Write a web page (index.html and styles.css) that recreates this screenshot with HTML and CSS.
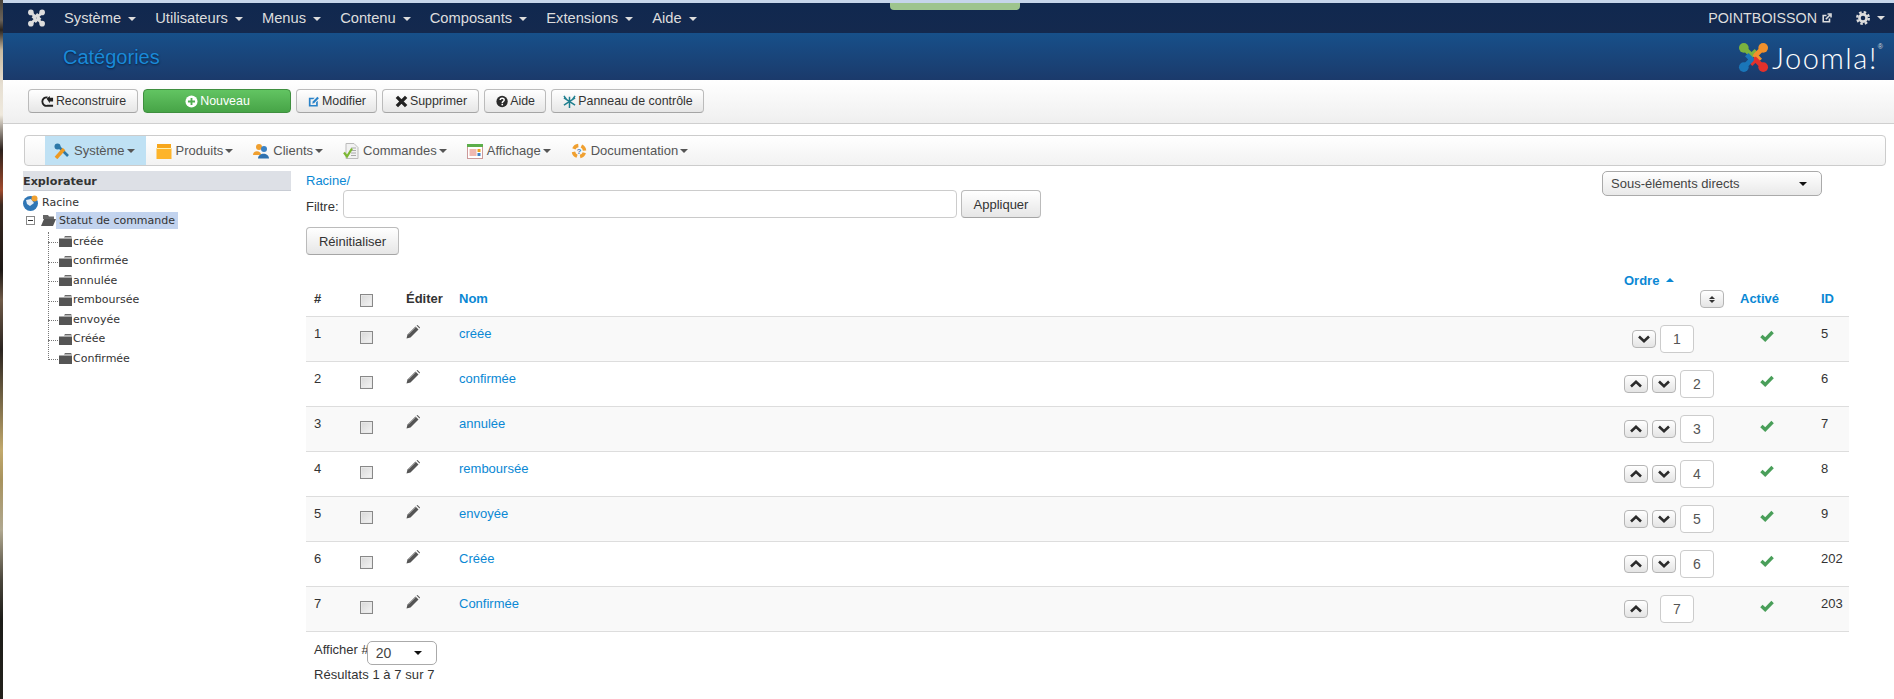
FILE: index.html
```html
<!DOCTYPE html>
<html lang="fr">
<head>
	<meta charset="UTF-8">
	<title>Catégories</title>
	<link rel="stylesheet" href="styles.css">
</head>
<body>
	<svg class="defs" width="0" height="0">
		<defs>
			<symbol id="i-piece" viewBox="0 0 32 32">
				<path d="M6 6 L14 14 L19 9" fill="none" stroke-width="5" stroke="currentColor" stroke-linejoin="round"/>
				<circle cx="6" cy="6" r="5" fill="currentColor"/>
			</symbol>
			<symbol id="i-up" viewBox="0 0 12 8">
				<path d="M1 6.5 L6 1.8 L11 6.5" fill="none" stroke="#2b2b2b" stroke-width="2.6"/>
			</symbol>
			<symbol id="i-down" viewBox="0 0 12 8">
				<path d="M1 1.5 L6 6.2 L11 1.5" fill="none" stroke="#2b2b2b" stroke-width="2.6"/>
			</symbol>
			<symbol id="i-pencil" viewBox="0 0 14 14">
				<path d="M0.5 13.5 L1.5 9.5 L9.5 1.5 L12.5 4.5 L4.5 12.5 Z" fill="#555"/>
				<path d="M10.5 0.5 L11.5 0 L14 2.5 L13.5 3.5 Z" fill="#555"/>
				<path d="M2.5 9.5 L9.8 2.2" stroke="#aaa" stroke-width="0.7"/>
			</symbol>
			<symbol id="i-check" viewBox="0 0 14 12">
				<path d="M1.4 6 L5.2 9.6 L12.6 2" fill="none" stroke="#4a9f5a" stroke-width="3.4"/>
			</symbol>
			<symbol id="i-folder" viewBox="0 0 13 11">
				<path d="M0 1.5 H5 L6 0 H12 L13 1.5 Z" fill="#6b6b6b"/>
				<path d="M0 2.5 H13 V11 H0 Z" fill="#555"/>
			</symbol>
		</defs>
	</svg>

	<div class="strip"></div>

	<div class="page">
		<div class="navbar">
			<div class="tab"></div>
			<svg class="nav-logo" viewBox="0 0 32 32">
				<use href="#i-piece"/>
				<use href="#i-piece" transform="rotate(90 16 16)"/>
				<use href="#i-piece" transform="rotate(180 16 16)"/>
				<use href="#i-piece" transform="rotate(270 16 16)"/>
			</svg>
			<ul class="nav-menu">
				<li>Système <b class="caret"></b></li>
				<li>Utilisateurs <b class="caret"></b></li>
				<li>Menus <b class="caret"></b></li>
				<li>Contenu <b class="caret"></b></li>
				<li>Composants <b class="caret"></b></li>
				<li>Extensions <b class="caret"></b></li>
				<li>Aide <b class="caret"></b></li>
			</ul>
			<div class="nav-right">
				<span class="site-name">POINTBOISSON</span>
				<svg class="ext-icon" viewBox="0 0 10 10">
					<path d="M7.5 5.5 V8.8 H1.2 V2.5 H4.5" fill="none" stroke="#ddd" stroke-width="1.6"/>
					<path d="M3.8 6.2 L8 2 M5.5 1 H9 V4.5" fill="none" stroke="#ddd" stroke-width="1.6"/>
				</svg>
				<svg class="gear-icon" viewBox="0 0 14 14">
					<circle cx="7" cy="7" r="3.6" fill="none" stroke="#ddd" stroke-width="2.6"/>
					<circle cx="7" cy="7" r="5.8" fill="none" stroke="#ddd" stroke-width="2.4" stroke-dasharray="2.5 2.05"/>
				</svg>
				<b class="caret"></b>
			</div>
		</div>

		<div class="title-bar">
			<h1>Catégories</h1>
			<div class="joomla">
				<svg class="joomla-mark" viewBox="0 0 32 32">
					<use href="#i-piece" class="c-green"/>
					<use href="#i-piece" class="c-orange" transform="rotate(90 16 16)"/>
					<use href="#i-piece" class="c-red" transform="rotate(180 16 16)"/>
					<use href="#i-piece" class="c-blue" transform="rotate(270 16 16)"/>
				</svg>
				<span class="joomla-text">Joomla!</span><span class="joomla-reg">®</span>
			</div>
		</div>

		<div class="toolbar">
			<button class="btn w-rebuild">
				<svg class="ico" viewBox="0 0 14 14">
					<path d="M7 2.6 A4.6 4.6 0 1 0 7 11.6 H13" fill="none" stroke="#222" stroke-width="2"/>
					<path d="M6 4 L9.5 1 V3 H13 V7 H9.5 V9 Z" fill="#222"/>
				</svg>
				Reconstruire
			</button>
			<button class="btn btn-new">
				<svg class="ico" viewBox="0 0 14 14">
					<circle cx="7" cy="7" r="6.5" fill="#fff"/>
					<path d="M7 3.2 V10.8 M3.2 7 H10.8" stroke="#50ad50" stroke-width="2"/>
				</svg>
				Nouveau
			</button>
			<button class="btn w-edit">
				<svg class="ico" viewBox="0 0 14 14">
					<path d="M1 2.5 H8 L6 4.5 H3 V11 H9.5 V8 L11.5 6 V13 H1 Z" fill="#2a83c9"/>
					<path d="M5 9.5 L5.6 7 L11 1.5 L12.8 3.3 L7.4 8.8 Z" fill="#2a83c9"/>
				</svg>
				Modifier
			</button>
			<button class="btn w-delete">
				<svg class="ico" viewBox="0 0 14 14">
					<path d="M2 2 L12 12 M12 2 L2 12" stroke="#222" stroke-width="3.6"/>
				</svg>
				Supprimer
			</button>
			<button class="btn w-help">
				<svg class="ico" viewBox="0 0 14 14">
					<circle cx="7" cy="7" r="6.5" fill="#2a2a2a"/>
					<path d="M4.8 5.4 C4.8 2.6 9.4 2.6 9.4 5.3 C9.4 7 7.2 6.9 7.2 8.6" fill="none" stroke="#fff" stroke-width="1.7"/>
					<rect x="6.3" y="9.6" width="1.8" height="1.8" fill="#fff"/>
				</svg>
				Aide
			</button>
			<button class="btn w-panel">
				<svg class="ico" viewBox="0 0 14 14">
					<path d="M7 2 V14 M1 3 L13 11 M13 3 L1 11 M1 1 L4 5 M13 1 L10 5" stroke="#1f7f8f" stroke-width="1.6" fill="none"/>
				</svg>
				Panneau de contrôle
			</button>
		</div>

		<div class="subnav">
			<div class="sub-item active">
				<svg class="sub-ico" viewBox="0 0 16 16">
					<path d="M3 2 L14 13" stroke="#2d78a8" stroke-width="2.6"/>
					<circle cx="3.5" cy="3.5" r="3" fill="#2d78a8"/>
					<path d="M2 15 L10 6" stroke="#ee9a22" stroke-width="3.6"/>
				</svg>
				Système <b class="caret-sm"></b>
			</div>
			<div class="sub-item">
				<svg class="sub-ico" viewBox="0 0 16 16">
					<rect x="1" y="1" width="14" height="4" fill="#f7a61b"/>
					<rect x="0.5" y="5" width="15" height="11" fill="#fdb42a"/>
					<rect x="0.5" y="5" width="15" height="1" fill="#fff0b0"/>
				</svg>
				Produits <b class="caret-sm"></b>
			</div>
			<div class="sub-item">
				<svg class="sub-ico" viewBox="0 0 16 16">
					<circle cx="6" cy="4" r="3" fill="#f0a030"/>
					<path d="M0 12 C0 7 8 7 8 12 Z" fill="#f0a030"/>
					<circle cx="11" cy="6" r="3" fill="#3b82c4"/>
					<path d="M5 15.5 C5 9 16 9 16 15.5 Z" fill="#2f72b0"/>
				</svg>
				Clients <b class="caret-sm"></b>
			</div>
			<div class="sub-item">
				<svg class="sub-ico" viewBox="0 0 16 16">
					<path d="M3 0.5 H11 L15 4.5 V15.5 H3 Z" fill="#f2f2f2" stroke="#bbb"/>
					<path d="M8 5 H13 M8 7.5 H13 M8 10 H13 M8 12.5 H13" stroke="#aaa"/>
					<path d="M1 9.5 L4 13.5 L9 5.5" fill="none" stroke="#7cb733" stroke-width="2.2"/>
				</svg>
				Commandes <b class="caret-sm"></b>
			</div>
			<div class="sub-item">
				<svg class="sub-ico" viewBox="0 0 16 16">
					<rect x="0.5" y="1.5" width="15" height="14" fill="#fff" stroke="#c99"/>
					<rect x="0" y="1" width="16" height="3" fill="#5cae4a"/>
					<rect x="2.5" y="6" width="7" height="7" fill="#f0b8b0"/>
					<rect x="10.5" y="6" width="3" height="3" fill="#e9a020"/>
					<rect x="10.5" y="10" width="3" height="3" fill="#3f7fc4"/>
				</svg>
				Affichage <b class="caret-sm"></b>
			</div>
			<div class="sub-item">
				<svg class="sub-ico" viewBox="0 0 16 16">
					<circle cx="8" cy="8" r="5.6" fill="none" stroke="#f0a030" stroke-width="3.4" stroke-dasharray="5.6 3.2" stroke-dashoffset="7"/>
					<text x="8" y="11" class="help-mark">?</text>
				</svg>
				Documentation <b class="caret-sm"></b>
			</div>
		</div>

		<div class="content">
			<div class="sidebar">
				<div class="side-title">Explorateur</div>
				<div class="tree">
					<div class="tree-root">
						<svg class="globe" viewBox="0 0 16 16">
							<circle cx="7.5" cy="8.5" r="7.5" fill="#2f76b5"/>
							<path d="M3 5 L8 4 L11 8 L7 11 L4 9 Z" fill="#e6eef6"/>
							<circle cx="11.5" cy="3.5" r="3" fill="#f0a030"/>
						</svg>
						Racine
					</div>
					<div class="tree-open">
						<span class="minus"></span>
						<svg class="folder-open" viewBox="0 0 15 11">
							<path d="M2 0 H7 L8 1.5 H13 V4 H2 Z" fill="#666"/>
							<path d="M3 4 H15 L12 11 H0 Z" fill="#555"/>
						</svg>
						<span class="selected">Statut de commande</span>
					</div>
					<ul class="tree-list">
						<li><svg class="folder"><use href="#i-folder"/></svg>créée</li>
						<li><svg class="folder"><use href="#i-folder"/></svg>confirmée</li>
						<li><svg class="folder"><use href="#i-folder"/></svg>annulée</li>
						<li><svg class="folder"><use href="#i-folder"/></svg>remboursée</li>
						<li><svg class="folder"><use href="#i-folder"/></svg>envoyée</li>
						<li><svg class="folder"><use href="#i-folder"/></svg>Créée</li>
						<li><svg class="folder"><use href="#i-folder"/></svg>Confirmée</li>
					</ul>
				</div>
			</div>

			<div class="main">
				<div class="filter-head">
					<div>
						<a class="link crumb">Racine/</a>
						<div class="filter-row">
							<label>Filtre:</label>
							<input type="text" class="filter-input">
							<button class="btn btn-plain">Appliquer</button>
						</div>
						<button class="btn btn-plain btn-reset">Réinitialiser</button>
					</div>
					<div class="drop drop-wide">Sous-éléments directs <b class="caret-dark"></b></div>
				</div>

				<table class="list">
					<colgroup>
						<col class="c1"><col class="c2"><col class="c3"><col class="c4"><col class="c5"><col class="c6"><col class="c7">
					</colgroup>
					<thead>
						<tr>
							<th>#</th>
							<th><input type="checkbox"></th>
							<th>Éditer</th>
							<th><a class="link">Nom</a></th>
							<th>
								<a class="link">Ordre</a><b class="caret-up"></b>
								<div class="sort-line"><button class="ord-btn"><span class="updown"></span></button></div>
							</th>
							<th><a class="link">Activé</a></th>
							<th><a class="link">ID</a></th>
						</tr>
					</thead>
					<tbody>
						<tr>
							<td>1</td>
							<td><input type="checkbox"></td>
							<td><svg class="pencil"><use href="#i-pencil"/></svg></td>
							<td><a class="link">créée</a></td>
							<td><div class="order"><span class="gap"></span><button class="ord-btn"><svg class="chev"><use href="#i-down"/></svg></button><input class="ord-input" value="1"></div></td>
							<td><svg class="check"><use href="#i-check"/></svg></td>
							<td>5</td>
						</tr>
						<tr>
							<td>2</td>
							<td><input type="checkbox"></td>
							<td><svg class="pencil"><use href="#i-pencil"/></svg></td>
							<td><a class="link">confirmée</a></td>
							<td><div class="order"><button class="ord-btn"><svg class="chev"><use href="#i-up"/></svg></button><button class="ord-btn"><svg class="chev"><use href="#i-down"/></svg></button><input class="ord-input" value="2"></div></td>
							<td><svg class="check"><use href="#i-check"/></svg></td>
							<td>6</td>
						</tr>
						<tr>
							<td>3</td>
							<td><input type="checkbox"></td>
							<td><svg class="pencil"><use href="#i-pencil"/></svg></td>
							<td><a class="link">annulée</a></td>
							<td><div class="order"><button class="ord-btn"><svg class="chev"><use href="#i-up"/></svg></button><button class="ord-btn"><svg class="chev"><use href="#i-down"/></svg></button><input class="ord-input" value="3"></div></td>
							<td><svg class="check"><use href="#i-check"/></svg></td>
							<td>7</td>
						</tr>
						<tr>
							<td>4</td>
							<td><input type="checkbox"></td>
							<td><svg class="pencil"><use href="#i-pencil"/></svg></td>
							<td><a class="link">remboursée</a></td>
							<td><div class="order"><button class="ord-btn"><svg class="chev"><use href="#i-up"/></svg></button><button class="ord-btn"><svg class="chev"><use href="#i-down"/></svg></button><input class="ord-input" value="4"></div></td>
							<td><svg class="check"><use href="#i-check"/></svg></td>
							<td>8</td>
						</tr>
						<tr>
							<td>5</td>
							<td><input type="checkbox"></td>
							<td><svg class="pencil"><use href="#i-pencil"/></svg></td>
							<td><a class="link">envoyée</a></td>
							<td><div class="order"><button class="ord-btn"><svg class="chev"><use href="#i-up"/></svg></button><button class="ord-btn"><svg class="chev"><use href="#i-down"/></svg></button><input class="ord-input" value="5"></div></td>
							<td><svg class="check"><use href="#i-check"/></svg></td>
							<td>9</td>
						</tr>
						<tr>
							<td>6</td>
							<td><input type="checkbox"></td>
							<td><svg class="pencil"><use href="#i-pencil"/></svg></td>
							<td><a class="link">Créée</a></td>
							<td><div class="order"><button class="ord-btn"><svg class="chev"><use href="#i-up"/></svg></button><button class="ord-btn"><svg class="chev"><use href="#i-down"/></svg></button><input class="ord-input" value="6"></div></td>
							<td><svg class="check"><use href="#i-check"/></svg></td>
							<td>202</td>
						</tr>
						<tr>
							<td>7</td>
							<td><input type="checkbox"></td>
							<td><svg class="pencil"><use href="#i-pencil"/></svg></td>
							<td><a class="link">Confirmée</a></td>
							<td><div class="order"><button class="ord-btn"><svg class="chev"><use href="#i-up"/></svg></button><span class="gap"></span><input class="ord-input" value="7"></div></td>
							<td><svg class="check"><use href="#i-check"/></svg></td>
							<td>203</td>
						</tr>
					</tbody>
				</table>

				<div class="pager">
					<div class="pager-row">Afficher #<div class="drop drop-small">20 <b class="caret-dark"></b></div></div>
					<div class="pager-count">Résultats 1 à 7 sur 7</div>
				</div>
			</div>
		</div>
	</div>
</body>
</html>
```

FILE: styles.css
```css
*{margin: 0;padding: 0;box-sizing: border-box;}
html,body{height: 100%;overflow: hidden;}
body{
	display: flex;
	background: #fff;
	color: #333;
	font-family: "Liberation Sans", Arial, sans-serif;
	font-size: 13px;
	line-height: 18px;
}
.defs{position: absolute;}
ul{list-style: none;}

/* bout de photo derriere la page */
.strip{
	width: 3px;
	flex: none;
	background: linear-gradient(to bottom, #4a443c 0, #6a635a 20px, #2a2420 30px, #c7b9a0 50px, #e6dfd2 85px, #efe9dd 115px, #2b211c 150px, #a04a2c 190px, #3a2a22 205px, #1c1714 270px, #6e5a48 300px, #2a2420 350px, #c2a96c 450px, #a8935e 480px, #b0a890 530px, #4a463c 580px, #1c1c18 620px, #23211c 699px);
}
.page{flex: 1;min-width: 0;}

/* barre du haut */
.navbar{
	position: relative;
	display: flex;
	align-items: center;
	height: 33px;
	border-top: 3px solid #c5d5ea;
	background: linear-gradient(to bottom, #10284f, #14294e);
	color: #ddd;
	font-size: 14.7px;
}
.tab{
	position: absolute;
	top: 0;
	left: 887px;
	width: 130px;
	height: 7px;
	background: #9dc48d;
	border-radius: 0 0 4px 4px;
}
.nav-logo{
	width: 19px;
	height: 18px;
	margin-left: 24px;
	color: #ddd;
}
.nav-menu{
	display: flex;
	gap: 19px;
	margin-left: 18px;
}
.nav-menu li{white-space: nowrap;}
.caret{
	display: inline-block;
	width: 0;
	height: 0;
	margin-left: 3px;
	vertical-align: middle;
	border-top: 4px solid #ddd;
	border-left: 4px solid transparent;
	border-right: 4px solid transparent;
}
.nav-right{
	display: flex;
	align-items: center;
	margin-left: auto;
	margin-right: 9px;
	font-size: 14.3px;
}
.ext-icon{width: 10px;height: 10px;margin-left: 5px;}
.gear-icon{width: 14px;height: 14px;margin-left: 24px;}
.nav-right .caret{margin-left: 7px;}

.title-bar{
	display: flex;
	justify-content: space-between;
	align-items: center;
	height: 47px;
	padding-left: 60px;
	background: linear-gradient(to bottom, #17508a, #1b3a6b);
}
.title-bar h1{
	font-size: 20px;
	font-weight: normal;
	color: #1a8ad8;
	text-shadow: 0 1px 2px #0a2140;
}
.joomla{
	display: flex;
	align-items: center;
	margin-right: 11px;
	margin-top: 2px;
}
.joomla-mark{width: 31px;height: 31px;}
.c-green{color: #7ab23e;}
.c-orange{color: #f0902c;}
.c-red{color: #e2312c;}
.c-blue{color: #1a76b9;}
.joomla-text{
	margin-left: 3px;
	font-family: Lato, sans-serif;
	font-weight: 300;
	font-size: 29px;
	letter-spacing: 1.55px;
	line-height: 31px;
	color: #fff;
}
.joomla-reg{
	align-self: flex-start;
	font-size: 7px;
	line-height: 10px;
	color: #ddd;
}

/* boutons */
.toolbar{
	display: flex;
	gap: 5px;
	height: 44px;
	padding: 9px 0 0 25px;
	background: linear-gradient(to bottom, #fff, #efefef);
	border-bottom: 1px solid #cfcfcf;
}
.btn{
	display: flex;
	align-items: center;
	justify-content: center;
	height: 24px;
	padding: 0 10px 0 11px;
	border: 1px solid #bbb;
	border-bottom-color: #a5a5a5;
	border-radius: 4px;
	background: linear-gradient(to bottom, #fff, #e6e6e6);
	color: #333;
	font: 12.4px "Liberation Sans", Arial, sans-serif;
	white-space: nowrap;
}
.ico{width: 13px;height: 13px;margin-right: 2px;}
.btn-new{
	width: 148px;
	background: linear-gradient(to bottom, #62c462, #47a447);
	border-color: #3f8f3f;
	color: #fff;
}
.w-rebuild{width: 110px;}
.w-edit{width: 81px;}
.w-delete{width: 97px;}
.w-help{width: 62px;}
.w-panel{width: 153px;}
.btn-plain{height: 28px;padding: 0 12px;font-size: 13px;}
.btn-reset{width: 93px;margin-top: 9px;}

/* menu secondaire */
.subnav{
	display: flex;
	height: 31px;
	margin: 11px 8px 0 21px;
	padding-left: 20px;
	border: 1px solid #ccc;
	border-radius: 4px;
	background: linear-gradient(to bottom, #fff, #f2f2f2);
	color: #555;
	font-size: 13px;
}
.sub-item{
	display: flex;
	align-items: center;
	padding: 0 10px;
	white-space: nowrap;
}
.sub-item.active{background: #bfe1f4;padding: 0 11px 0 9px;}
.sub-ico{width: 16px;height: 16px;margin-right: 4px;}
.help-mark{
	font-size: 8px;
	font-weight: bold;
	text-anchor: middle;
	fill: #3f7fc4;
}
.caret-sm{
	width: 0;
	height: 0;
	margin-left: 2px;
	border-top: 4px solid #555;
	border-left: 4px solid transparent;
	border-right: 4px solid transparent;
}

.content{
	display: flex;
	padding: 5px 0 0 20px;
}

/* explorateur */
.sidebar{
	width: 268px;
	flex: none;
	font-family: "DejaVu Sans", Verdana, sans-serif;
	font-size: 11px;
	color: #333;
}
.side-title{
	height: 20px;
	background: #dde0e6;
	border-bottom: 1px solid #c8ccd4;
	font-size: 11.2px;
	font-weight: bold;
	line-height: 22px;
}
.tree{padding-top: 3px;}
.tree-root{
	display: flex;
	align-items: center;
	height: 18px;
}
.globe{width: 16px;height: 16px;margin-right: 3px;}
.tree-open{
	display: flex;
	align-items: center;
	height: 17px;
	padding-left: 3px;
}
.minus{
	position: relative;
	width: 9px;
	height: 9px;
	border: 1px solid #888;
	background: #fff;
}
.minus::after{
	content: "";
	position: absolute;
	left: 1px;
	top: 3px;
	width: 5px;
	height: 1px;
	background: #333;
}
.folder-open{width: 15px;height: 11px;margin-left: 6px;}
.selected{
	height: 17px;
	padding: 0 3px;
	background: #c2d3ee;
	line-height: 17px;
}
.tree-list{
	position: relative;
	padding: 3px 0 0 25px;
}
.tree-list::before{
	content: "";
	position: absolute;
	left: 25px;
	top: 3px;
	bottom: 9px;
	border-left: 1px dotted #777;
}
.tree-list li{
	display: flex;
	align-items: center;
	height: 19.5px;
	padding-left: 11px;
	position: relative;
}
.tree-list li::before{
	content: "";
	position: absolute;
	left: 0;
	top: 10px;
	width: 10px;
	border-top: 1px dotted #777;
}
.folder{width: 13px;height: 11px;margin-right: 1px;}

/* partie droite */
.main{
	width: 1543px;
	margin: 1px 0 0 15px;
	flex: none;
}
.link{color: #0a88d4;}
.crumb{display: block;}
.filter-head{
	display: flex;
	justify-content: space-between;
	align-items: flex-start;
}
.filter-row{
	display: flex;
	align-items: center;
	gap: 4px;
}
.filter-row label{padding-top: 5px;}
.filter-input{
	width: 614px;
	height: 28px;
	border: 1px solid #ccc;
	border-radius: 4px;
	background: #fff;
}
.drop{
	display: flex;
	align-items: center;
	justify-content: space-between;
	border: 1px solid #aaa;
	border-radius: 5px;
	background: linear-gradient(to bottom, #fff, #e9e9e9);
	color: #444;
	white-space: nowrap;
}
.drop-wide{
	width: 220px;
	height: 25px;
	margin: -1px 27px 0 0;
	padding: 0 14px 0 8px;
}
.drop-small{
	width: 70px;
	height: 24px;
	margin-left: -2px;
	padding: 0 14px 0 8px;
	font-size: 14px;
	background: #fff;
}
.caret-dark{
	width: 0;
	height: 0;
	border-top: 4px solid #111;
	border-left: 4px solid transparent;
	border-right: 4px solid transparent;
}

/* tableau */
.list{
	width: 1543px;
	margin-top: 9px;
	table-layout: fixed;
	border-collapse: separate;
	border-spacing: 0;
}
.c1,.c2{width: 46px;}
.c3{width: 53px;}
.c5{width: 116px;}
.c6{width: 81px;}
.c7{width: 36px;}
.list th{
	padding: 8px;
	text-align: left;
	vertical-align: bottom;
	color: #333;
}
.list td{
	padding: 8px;
	vertical-align: top;
	border-top: 1px solid #ddd;
}
.list tbody tr:nth-child(odd) td{background: #f9f9f9;}
.list tbody tr:last-child td{border-bottom: 1px solid #ddd;}
.list input[type=checkbox]{
	display: block;
	appearance: none;
	width: 13px;
	height: 13px;
	margin: 6px 0 0 0;
	border: 1px solid #888;
	background: linear-gradient(135deg, #d8d8d8, #f4f4f4);
	box-shadow: inset 0 0 0 1px #e8e8e8;
}
.list th input[type=checkbox]{margin: 0 0 1px 0;}
.pencil{display: block;width: 14px;height: 14px;margin-top: 0;}
.check{display: block;width: 14px;height: 12px;margin: 5px 0 0 20px;}
.caret-up{
	display: inline-block;
	margin-left: 7px;
	vertical-align: 3px;
	width: 0;
	height: 0;
	border-bottom: 4px solid #0a88d4;
	border-left: 4px solid transparent;
	border-right: 4px solid transparent;
}
.sort-line{display: flex;justify-content: flex-end;}
.ord-btn{
	display: flex;
	align-items: center;
	justify-content: center;
	flex: none;
	width: 24px;
	height: 18px;
	border: 1px solid #b5b5b5;
	border-radius: 4px;
	background: linear-gradient(to bottom, #fff, #e4e4e4);
}
.updown{
	width: 0;
	height: 0;
	border-left: 3px solid transparent;
	border-right: 3px solid transparent;
	border-bottom: 3px solid #333;
	position: relative;
	top: -2px;
}
.updown::after{
	content: "";
	position: absolute;
	left: -3px;
	top: 4px;
	border-left: 3px solid transparent;
	border-right: 3px solid transparent;
	border-top: 3px solid #333;
}
.chev{width: 12px;height: 8px;}
.order{
	display: flex;
	align-items: center;
	gap: 4px;
}
.gap{width: 4px;flex: none;}
.ord-input{
	width: 34px;
	height: 28px;
	border: 1px solid #ccc;
	border-radius: 4px;
	background: #fff;
	color: #555;
	text-align: center;
	font: 14px "Liberation Sans", Arial, sans-serif;
}

.pager{padding: 9px 0 0 8px;}
.pager-row{
	display: flex;
	align-items: flex-start;
	white-space: pre;
}
.pager-count{margin-top: 1px;letter-spacing: 0.06px;}
```
